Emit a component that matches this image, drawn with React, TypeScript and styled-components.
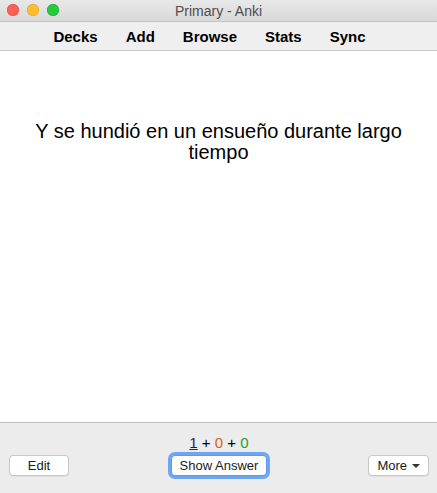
import React from "react";
import styled, { createGlobalStyle } from "styled-components";

const Global = createGlobalStyle`
  html, body { margin: 0; padding: 0; height: 100%; }
  body { font-family: "Liberation Sans", Arial, sans-serif; background: #ececec; }
  #root { height: 100%; }
`;

const Window = styled.div`
  width: 437px;
  height: 493px;
  display: flex;
  flex-direction: column;
  background: #ececec;
  overflow: hidden;
`;

const TitleBar = styled.div`
  height: 21px;
  position: relative;
  display: flex;
  align-items: center;
  justify-content: center;
  background: linear-gradient(#e8e8e8, #d9d9d9);
  border-bottom: 1px solid #c4c4c4;
  flex-shrink: 0;
`;

const Lights = styled.div`
  position: absolute;
  left: 7px;
  top: 4px;
  display: flex;
  gap: 8px;
`;

const Light = styled.span<{ $c: string; $b: string }>`
  width: 12px;
  height: 12px;
  border-radius: 50%;
  background: ${(p) => p.$c};
  box-shadow: inset 0 0 0 0.5px ${(p) => p.$b};
`;

const Title = styled.div`
  font-size: 14px;
  color: #4d4d4d;
`;

const Toolbar = styled.div`
  height: 28px;
  display: flex;
  align-items: center;
  justify-content: center;
  gap: 28px;
  padding-right: 18px;
  background: #efefef;
  border-bottom: 1px solid #c9c9c9;
  flex-shrink: 0;
`;

const NavLink = styled.span`
  font-weight: bold;
  font-size: 15px;
  color: #000;
`;

const Card = styled.div`
  flex: 1;
  background: #fff;
  border-bottom: 1px solid #bdbdbd;
  padding: 70px 20px 0;
  text-align: center;
  font-size: 20px;
  line-height: 21px;
  color: #000;
`;

const Bottom = styled.div`
  height: 70px;
  flex-shrink: 0;
  display: grid;
  grid-template-columns: 1fr auto 1fr;
  align-items: end;
  padding: 0 8px 17px 9px;
  box-sizing: border-box;
`;

const Center = styled.div`
  display: flex;
  flex-direction: column;
  align-items: center;
  gap: 4px;
`;

const Counts = styled.div`
  font-size: 15px;
  color: #000;
  white-space: pre;
`;

const Count = styled.span<{ $c: string; $u?: boolean }>`
  color: ${(p) => p.$c};
  text-decoration: ${(p) => (p.$u ? "underline" : "none")};
`;

const Button = styled.button<{ $focus?: boolean }>`
  height: 21px;
  padding: 0 8px;
  min-width: 60px;
  font-family: "Liberation Sans", Arial, sans-serif;
  font-size: 13px;
  color: #1a1a1a;
  background: #fff;
  border: 1px solid #c8c8c8;
  border-radius: 4px;
  box-shadow: ${(p) => (p.$focus ? "0 0 0 3px #6fa6f2" : "0 0.5px 0.5px rgba(0,0,0,0.1)")};
  ${(p) => (p.$focus ? "border-color:#5a9af0;" : "")}
  display: inline-flex;
  align-items: center;
  justify-content: center;
  gap: 5px;
`;

const Left = styled.div`
  display: flex;
  justify-content: flex-start;
`;

const Right = styled.div`
  display: flex;
  justify-content: flex-end;
`;

const Caret = styled.span`
  width: 0;
  height: 0;
  border-left: 4px solid transparent;
  border-right: 4px solid transparent;
  border-top: 4px solid #333;
  margin-top: 1px;
`;

export default function App() {
  return (
    <>
      <Global />
      <Window>
        <TitleBar>
          <Lights>
            <Light $c="#fe5f57" $b="#e2463f" />
            <Light $c="#febc2e" $b="#e1a116" />
            <Light $c="#28c840" $b="#12ac28" />
          </Lights>
          <Title>Primary - Anki</Title>
        </TitleBar>
        <Toolbar>
          <NavLink>Decks</NavLink>
          <NavLink>Add</NavLink>
          <NavLink>Browse</NavLink>
          <NavLink>Stats</NavLink>
          <NavLink>Sync</NavLink>
        </Toolbar>
        <Card>Y se hundió en un ensueño durante largo tiempo</Card>
        <Bottom>
          <Left>
            <Button>Edit</Button>
          </Left>
          <Center>
            <Counts>
              <Count $c="#1a1a80" $u>1</Count> + <Count $c="#d55f0f">0</Count> + <Count $c="#1fa21f">0</Count>
            </Counts>
            <Button $focus>Show Answer</Button>
          </Center>
          <Right>
            <Button>
              More <Caret />
            </Button>
          </Right>
        </Bottom>
      </Window>
    </>
  );
}
